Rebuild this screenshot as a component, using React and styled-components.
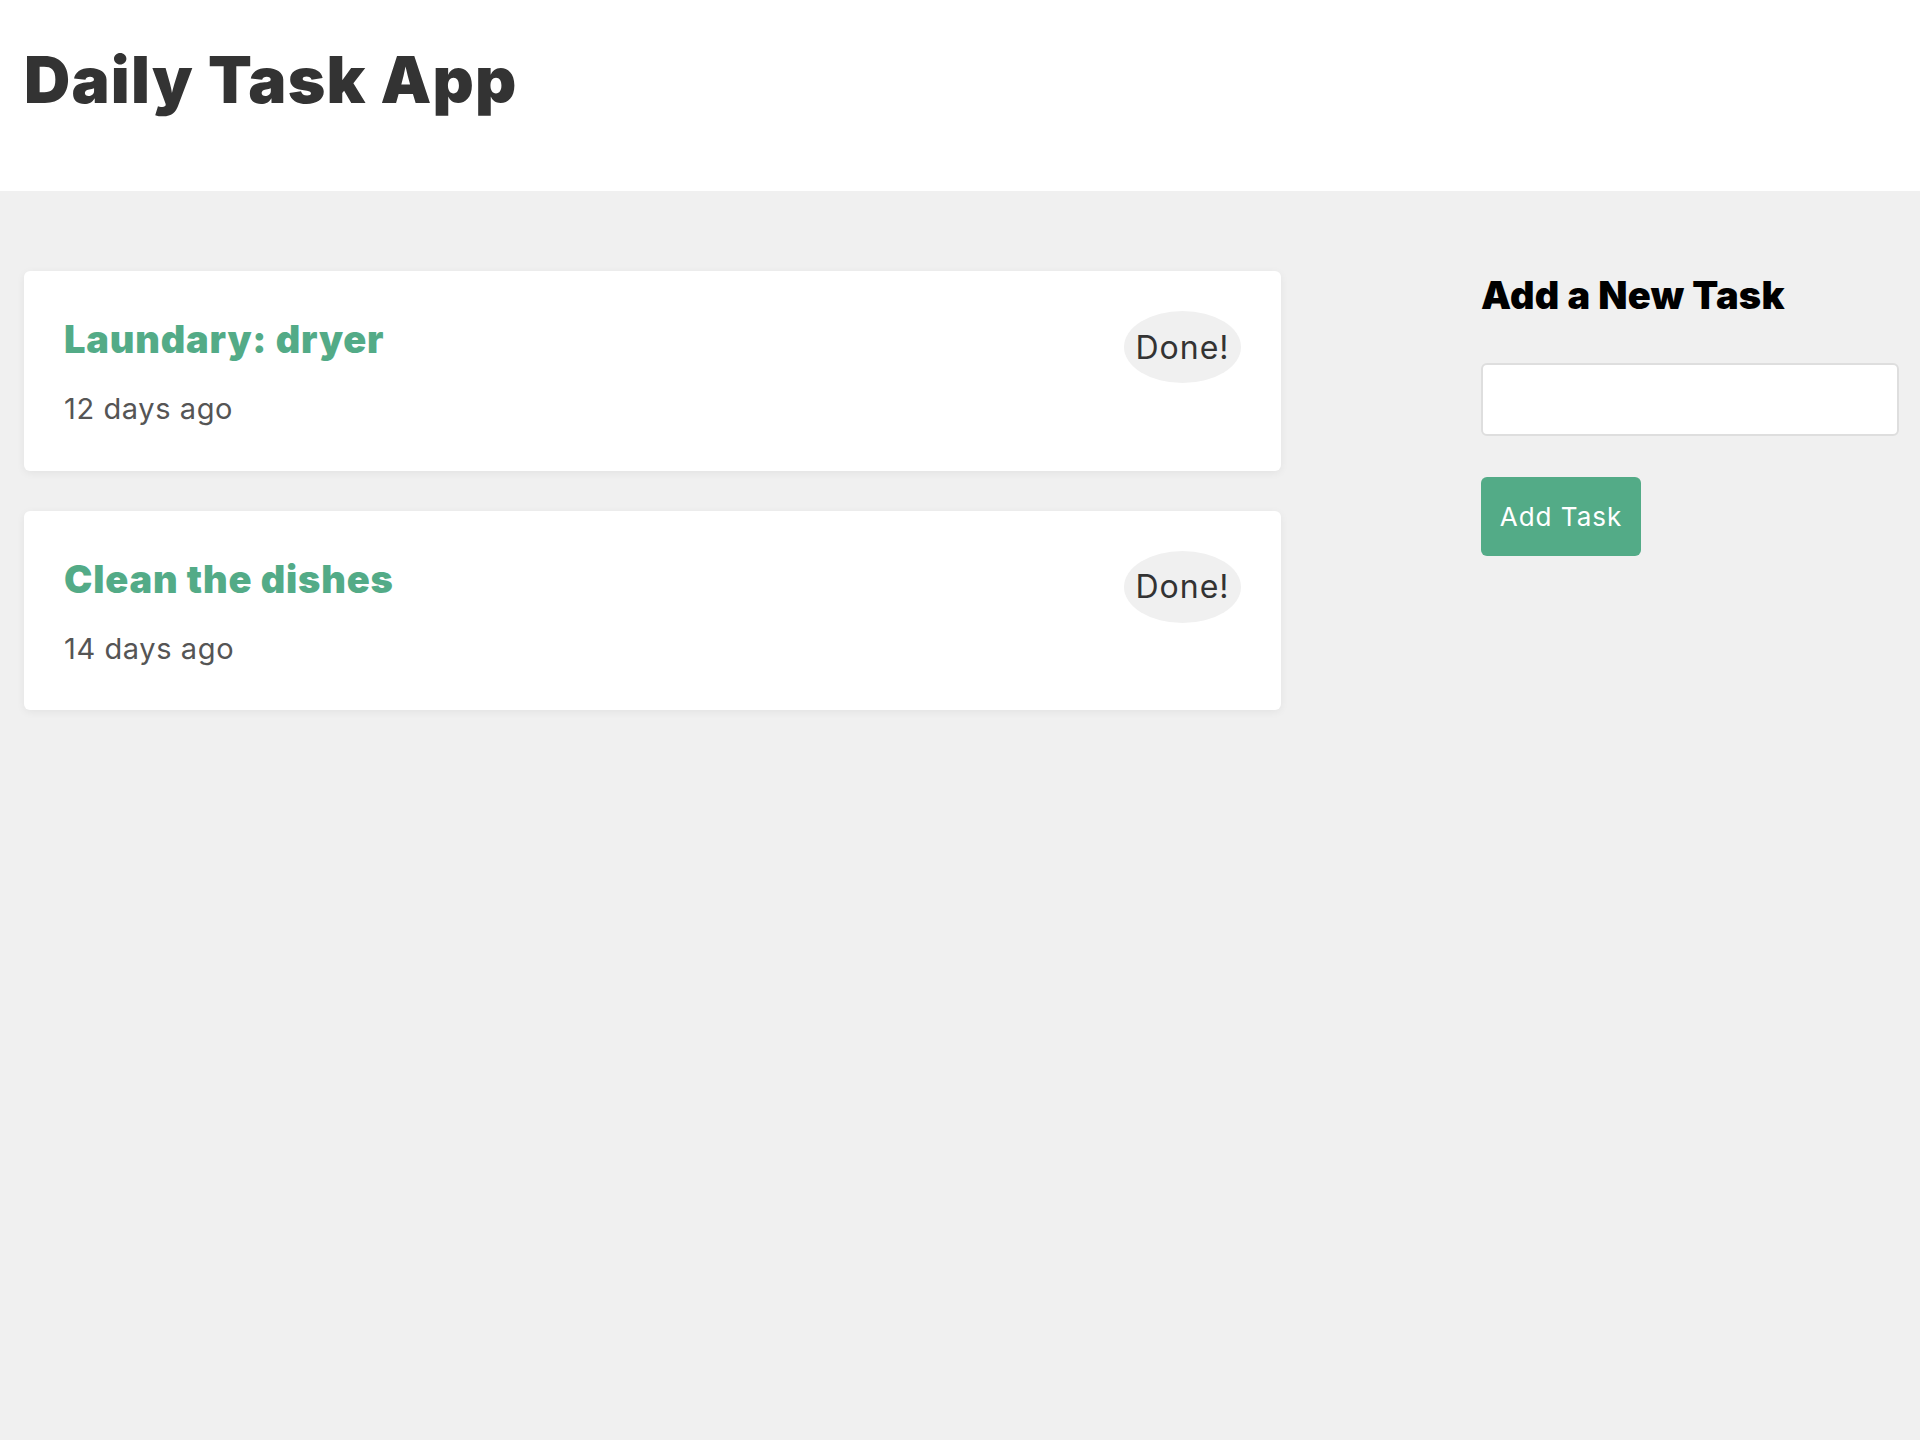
import React, { useState } from 'react';
import styled, { createGlobalStyle } from 'styled-components';

const GlobalStyle = createGlobalStyle`
  html, body {
    margin: 0;
    padding: 0;
    background: #f0f0f0;
    font-family: Inter, "Noto Sans", "Liberation Sans", sans-serif;
  }
  * { box-sizing: border-box; }
`;

const Header = styled.header`
  background: #fff;
  height: 191px;
  padding: 41px 24px 0;
`;

const AppTitle = styled.h1`
  margin: 0;
  font-size: 64px;
  font-weight: 900;
  line-height: normal;
  color: #333;
  letter-spacing: 1.2px;
`;

const Main = styled.main`
  display: grid;
  grid-template-columns: 1fr 418px;
  column-gap: 200px;
  align-items: start;
  padding: 80px 21px 0 24px;
  min-height: 1249px;
`;

const TaskList = styled.div`
  display: flex;
  flex-direction: column;
  gap: 40px;
`;

const Card = styled.div`
  display: flex;
  justify-content: space-between;
  align-items: flex-start;
  background: #fff;
  border-radius: 6px;
  padding: 40px;
  box-shadow: 0 2px 8px rgba(0, 0, 0, 0.06);
`;

const TaskTitle = styled.h2`
  margin: 0;
  font-size: 38px;
  line-height: 57px;
  font-weight: 900;
  color: #53ab87;
  letter-spacing: 0.8px;
`;

const TaskDate = styled.p`
  margin: 19px 0 0;
  font-size: 29px;
  line-height: 43.5px;
  color: #555;
  letter-spacing: 0.6px;
`;

const DoneButton = styled.button`
  display: inline-flex;
  align-items: center;
  justify-content: center;
  width: 117px;
  height: 72px;
  padding: 0;
  border: none;
  border-radius: 50%;
  background: #f0f0f0;
  color: #333;
  font-family: inherit;
  font-size: 32px;
  letter-spacing: 1px;
  cursor: pointer;
`;

const Sidebar = styled.aside`
  display: flex;
  flex-direction: column;
  align-items: flex-start;
`;

const SideTitle = styled.h3`
  margin: 1px 0 0;
  font-size: 38px;
  font-weight: 900;
  line-height: normal;
  color: #000;
  letter-spacing: 0.3px;
`;

const TaskInput = styled.input`
  margin-top: 45px;
  width: 100%;
  height: 73px;
  border: 2px solid #dedede;
  border-radius: 6px;
  background: #fff;
  font-family: inherit;
  font-size: 26px;
  padding: 0 16px;
  outline: none;
`;

const AddButton = styled.button`
  margin-top: 41px;
  width: 160px;
  height: 79px;
  border: none;
  border-radius: 6px;
  background: #53ab87;
  color: #fff;
  font-family: inherit;
  font-size: 26px;
  letter-spacing: 1px;
  padding: 0 16px;
  cursor: pointer;
`;

const tasks = [
  { id: 1, title: 'Laundary: dryer', date: '12 days ago' },
  { id: 2, title: 'Clean the dishes', date: '14 days ago' },
];

export default function App() {
  const [text, setText] = useState('');
  return (
    <>
      <GlobalStyle />
      <Header>
        <AppTitle>Daily Task App</AppTitle>
      </Header>
      <Main>
        <TaskList>
          {tasks.map((t) => (
            <Card key={t.id}>
              <div>
                <TaskTitle>{t.title}</TaskTitle>
                <TaskDate>{t.date}</TaskDate>
              </div>
              <DoneButton>Done!</DoneButton>
            </Card>
          ))}
        </TaskList>
        <Sidebar>
          <SideTitle>Add a New Task</SideTitle>
          <TaskInput value={text} onChange={(e) => setText(e.target.value)} />
          <AddButton>Add Task</AddButton>
        </Sidebar>
      </Main>
    </>
  );
}
